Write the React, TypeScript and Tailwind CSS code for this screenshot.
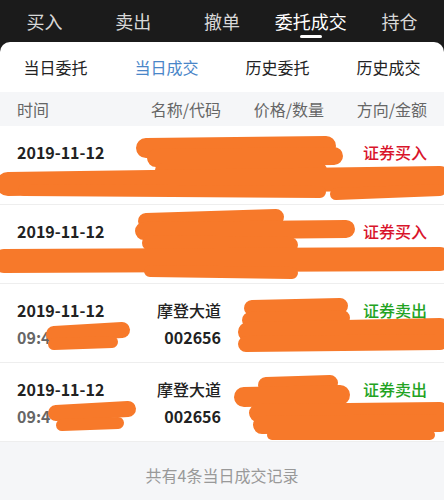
const topTabs = ["买入", "卖出", "撤单", "委托成交", "持仓"];
const subTabs = ["当日委托", "当日成交", "历史委托", "历史成交"];

type Stroke = { d: string; w: number };

type Deal = {
  date: string;
  time?: string;
  name?: string;
  code?: string;
  side: "buy" | "sell";
  marks: Stroke[];
};

const deals: Deal[] = [
  {
    date: "2019-11-12",
    side: "buy",
    marks: [
      { d: "M146 22 L326 20", w: 20 },
      { d: "M156 32 L334 30", w: 18 },
      { d: "M162 44 L320 44", w: 14 },
      { d: "M8 58 L440 52", w: 24 },
      { d: "M24 64 L320 66", w: 12 },
      { d: "M336 68 L440 64", w: 12 },
    ],
  },
  {
    date: "2019-11-12",
    side: "buy",
    marks: [
      { d: "M146 16 L276 12", w: 16 },
      { d: "M144 26 L346 24", w: 18 },
      { d: "M150 38 L290 40", w: 16 },
      { d: "M4 56 L440 54", w: 24 },
      { d: "M150 66 L292 68", w: 12 },
    ],
  },
  {
    date: "2019-11-12",
    time: "09:4",
    name: "摩登大道",
    code: "002656",
    side: "sell",
    marks: [
      { d: "M54 50 L122 46", w: 16 },
      { d: "M54 60 L112 58", w: 12 },
      { d: "M252 24 L340 22", w: 16 },
      { d: "M250 36 L342 34", w: 16 },
      { d: "M248 48 L440 44", w: 20 },
      { d: "M246 60 L440 58", w: 16 },
    ],
  },
  {
    date: "2019-11-12",
    time: "09:4",
    name: "摩登大道",
    code: "002656",
    side: "sell",
    marks: [
      { d: "M56 50 L128 46", w: 16 },
      { d: "M62 62 L118 60", w: 12 },
      { d: "M266 22 L330 20", w: 16 },
      { d: "M244 34 L340 32", w: 20 },
      { d: "M258 50 L440 48", w: 18 },
      { d: "M262 62 L440 60", w: 18 },
      { d: "M272 72 L430 72", w: 10 },
    ],
  },
];

const Scribble = ({ marks }: { marks: Stroke[] }) => (
  <svg
    className="pointer-events-none absolute inset-0"
    width="444"
    height="79"
    viewBox="0 0 444 79"
  >
    {marks.map((m, i) => (
      <path
        key={i}
        d={m.d}
        stroke="#f7792a"
        strokeWidth={m.w}
        strokeLinecap="round"
        fill="none"
      />
    ))}
  </svg>
);

const App = () => {
  return (
    <div
      className="relative h-[500px] w-[444px] overflow-hidden bg-[#1b1b1b]"
      style={{ fontFamily: '"Noto Sans CJK SC", "Noto Sans", sans-serif' }}
    >
      {/* TOP TABS */}
      <div className="grid h-[42px] grid-cols-5">
        {topTabs.map((t) => (
          <div key={t} className="relative flex items-center justify-center">
            <span
              className={`text-[18px] leading-none ${
                t === "委托成交" ? "text-white" : "text-[#d8d8d8]"
              }`}
            >
              {t}
            </span>
            {t === "委托成交" && (
              <span className="absolute bottom-[4px] left-1/2 h-[3px] w-[22px] -translate-x-1/2 rounded-full bg-white" />
            )}
          </div>
        ))}
      </div>

      <div className="flex h-[458px] flex-col overflow-hidden rounded-t-[10px] bg-white">
        {/* SUB TABS */}
        <div className="grid h-[50px] grid-cols-4">
          {subTabs.map((t) => (
            <div
              key={t}
              className={`flex items-center justify-center text-[16px] leading-none ${
                t === "当日成交" ? "text-[#4a86c8]" : "text-[#222]"
              }`}
            >
              {t}
            </div>
          ))}
        </div>

        {/* TABLE HEADER */}
        <div className="grid h-[34px] grid-cols-[1fr_104px_103px_103px] items-center bg-[#f5f6f8] px-[17px] text-[16px] leading-none text-[#666]">
          <span>时间</span>
          <span className="text-right">名称/代码</span>
          <span className="text-right">价格/数量</span>
          <span className="text-right">方向/金额</span>
        </div>

        {/* ROWS */}
        {deals.map((deal, i) => (
          <div
            key={i}
            className="relative h-[79px] shrink-0 border-b border-[#eeeeee]"
          >
            <div className="grid grid-cols-[1fr_104px_103px_103px] grid-rows-[27px_27px] items-center px-[17px] pt-[12px] text-[16px] leading-none">
              <span className="font-bold text-[#222]">{deal.date}</span>
              <span className="text-right font-medium text-[#222]">
                {deal.name}
              </span>
              <span />
              <span
                className={`text-right font-medium ${
                  deal.side === "buy" ? "text-[#d9142b]" : "text-[#22a322]"
                }`}
              >
                {deal.side === "buy" ? "证券买入" : "证券卖出"}
              </span>
              <span className="font-bold text-[#666]">{deal.time}</span>
              <span className="text-right font-bold text-[#222]">
                {deal.code}
              </span>
              <span />
              <span />
            </div>
            <Scribble marks={deal.marks} />
          </div>
        ))}

        {/* FOOTER */}
        <div className="flex flex-1 items-start justify-center bg-[#f5f6f8] pt-[25px] text-[16px] leading-none text-[#999]">
          共有4条当日成交记录
        </div>
      </div>
    </div>
  );
};

export default App;
